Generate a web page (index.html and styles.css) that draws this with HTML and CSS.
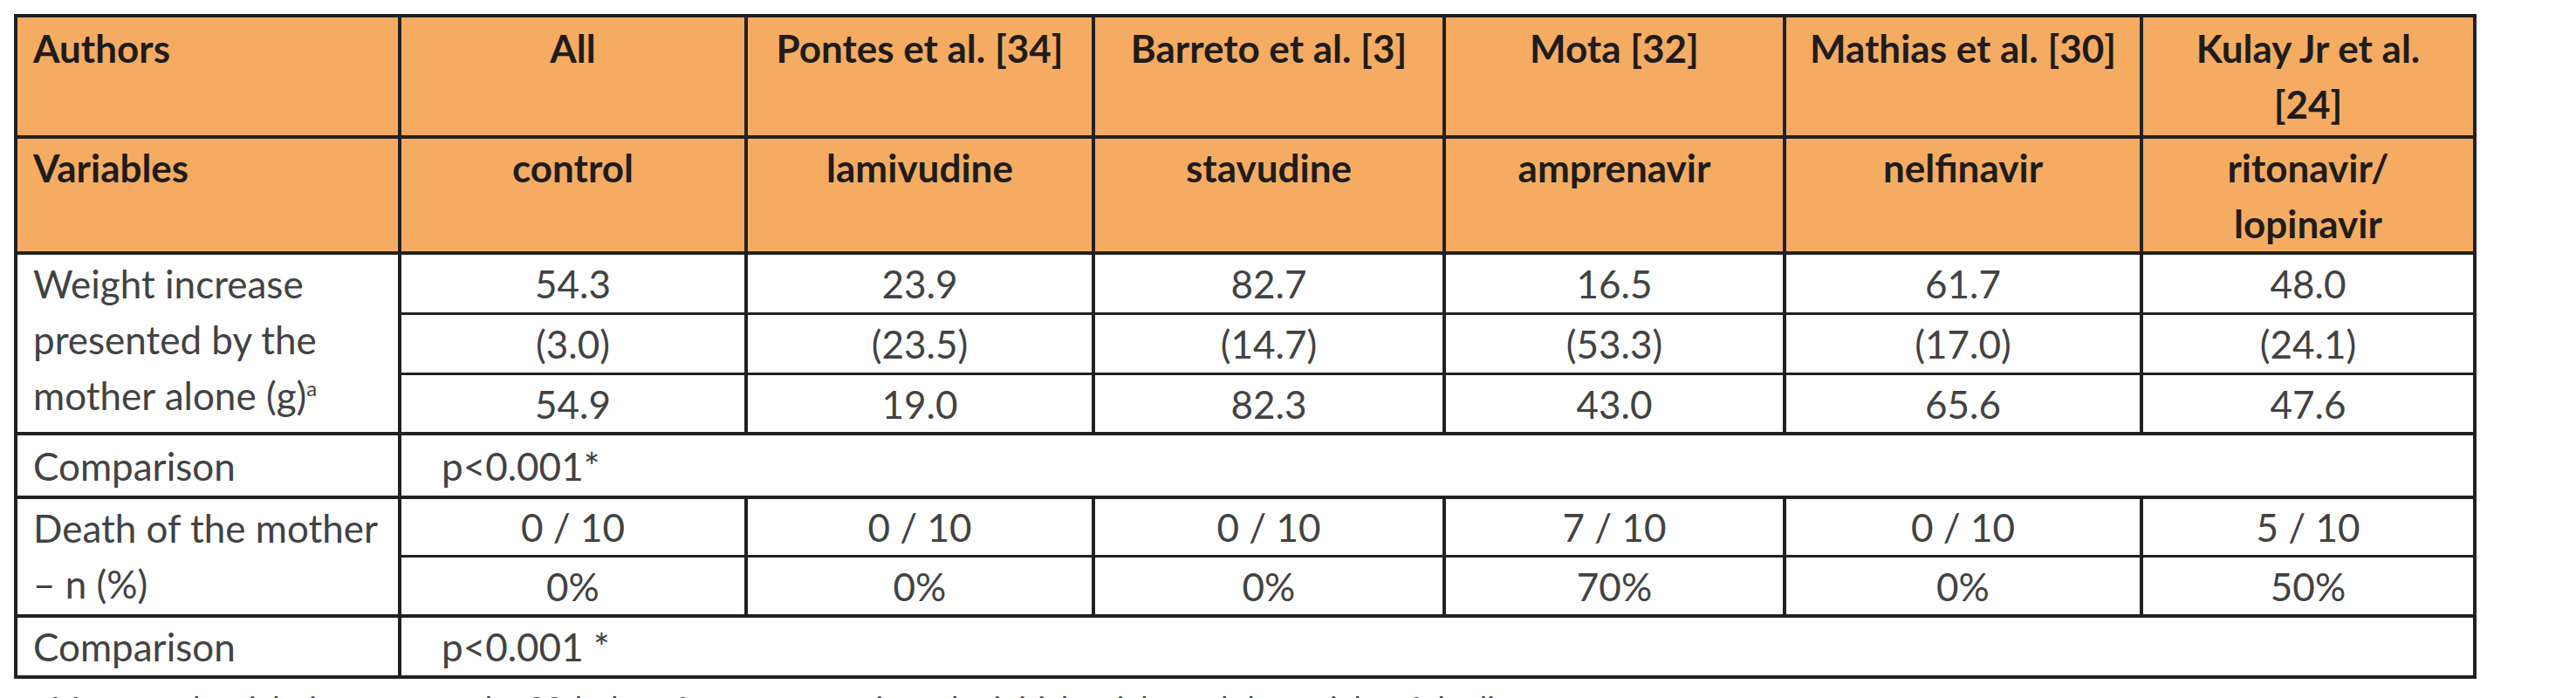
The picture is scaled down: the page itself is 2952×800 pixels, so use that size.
FILE: index.html
```html
<!DOCTYPE html>
<html lang="en">
<head>
<meta charset="utf-8">
<title>Table</title>
<link rel="stylesheet" href="styles.css">
</head>
<body>
<div class="page">
  <table class="data">
    <colgroup>
      <col class="c1"><col class="c2"><col class="c3"><col class="c4"><col class="c5"><col class="c6"><col class="c7">
    </colgroup>
    <thead>
      <tr class="h1">
        <th class="left">Authors</th>
        <th>All</th>
        <th>Pontes et al. [34]</th>
        <th>Barreto et al. [3]</th>
        <th>Mota [32]</th>
        <th>Mathias et al. [30]</th>
        <th>Kulay Jr et al.<br>[24]</th>
      </tr>
      <tr class="h2">
        <th class="left">Variables</th>
        <th>control</th>
        <th>lamivudine</th>
        <th>stavudine</th>
        <th>amprenavir</th>
        <th>nelfinavir</th>
        <th>ritonavir/<br>lopinavir</th>
      </tr>
    </thead>
    <tbody>
      <tr class="sub first">
        <td class="left label" rowspan="3">Weight increase<br>presented by the<br>mother alone (g)<sup>a</sup></td>
        <td>54.3</td><td>23.9</td><td>82.7</td><td>16.5</td><td>61.7</td><td>48.0</td>
      </tr>
      <tr class="sub">
        <td>(3.0)</td><td>(23.5)</td><td>(14.7)</td><td>(53.3)</td><td>(17.0)</td><td>(24.1)</td>
      </tr>
      <tr class="sub last">
        <td>54.9</td><td>19.0</td><td>82.3</td><td>43.0</td><td>65.6</td><td>47.6</td>
      </tr>
      <tr class="cmp">
        <td class="left label">Comparison</td>
        <td class="pval" colspan="6">p&lt;0.001*</td>
      </tr>
      <tr class="sub first tight">
        <td class="left label" rowspan="2">Death of the mother<br>– n (%)</td>
        <td>0 / 10</td><td>0 / 10</td><td>0 / 10</td><td>7 / 10</td><td>0 / 10</td><td>5 / 10</td>
      </tr>
      <tr class="sub last">
        <td>0%</td><td>0%</td><td>0%</td><td>70%</td><td>0%</td><td>50%</td>
      </tr>
      <tr class="cmp end">
        <td class="left label">Comparison</td>
        <td class="pval" colspan="6">p&lt;0.001 *</td>
      </tr>
    </tbody>
  </table>
  <p class="note"><sup>a</sup> Mean total weight increase on the 20th day of pregnancy, minus the initial weight and the weight of the litter</p>
</div>
</body>
</html>
```

FILE: styles.css
```css
html, body {
  margin: 0;
  padding: 0;
  background: #ffffff;
}

.page {
  padding: 16px 0 0 16px;
  font-family: Lato, "Liberation Sans", sans-serif;
}

.data {
  border-collapse: collapse;
  table-layout: fixed;
  width: 2818px;
  font-size: 44px;
  line-height: 64px;
  color: #424242;
  border: 4px solid #232021;
}

.c1 { width: 440px; }
.c2 { width: 397px; }
.c3 { width: 398px; }
.c4 { width: 402px; }
.c5 { width: 390px; }
.c6 { width: 409px; }
.c7 { width: 382px; }

.data th,
.data td {
  border: 4px solid #232021;
  padding: 1px 18px 1px;
  text-align: center;
  vertical-align: top;
  font-weight: 400;
}

.data th {
  background: #f5ac62;
  color: #1f1c1c;
  font-weight: 700;
}

.data .h1 th {
  padding-top: 3px;
  padding-bottom: 4px;
}

.data .h2 th {
  padding-top: 1px;
  padding-bottom: 0;
}

.data .left {
  text-align: left;
}

.data .sub td {
  border-top-width: 3px;
  border-bottom-width: 3px;
}

.data .sub.first td {
  border-top-width: 4px;
}

.data .sub.last td {
  border-bottom-width: 4px;
  padding-bottom: 0;
}

.data .sub.tight td {
  padding-top: 0;
  padding-bottom: 0;
}

.data .sub td.label {
  border-top-width: 4px;
  border-bottom-width: 4px;
  padding-top: 1px;
  padding-bottom: 0;
}

.data .cmp td {
  padding-top: 3px;
  padding-bottom: 2px;
}

.data .cmp.end td {
  padding-top: 1px;
  padding-bottom: 1px;
}

.data td.pval {
  text-align: left;
  padding-left: 46px;
}

.data sup {
  font-size: 24px;
  line-height: 0;
  vertical-align: 16px;
}

.note {
  margin: 9px 0 0 22px;
  font-size: 36px;
  line-height: 48px;
  color: #404040;
  white-space: nowrap;
}

.note sup {
  font-size: 22px;
  line-height: 0;
  vertical-align: 12px;
}
```
